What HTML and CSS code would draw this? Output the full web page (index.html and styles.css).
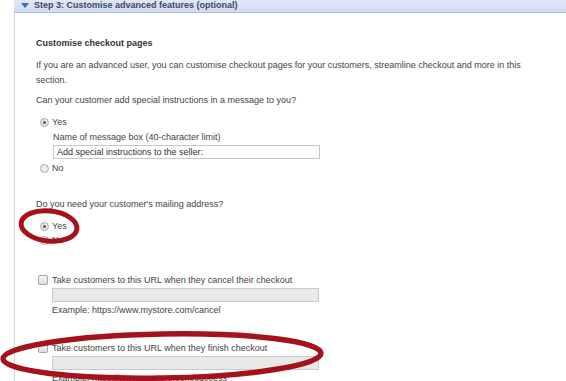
FILE: index.html
```html
<!DOCTYPE html>
<html lang="en">
<head>
    <meta charset="UTF-8">
    <title>Customise advanced features</title>
    <link rel="stylesheet" href="styles.css">
</head>
<body>
    <div class="step">
        <div class="step-head"><span class="caret"></span>Step 3: Customise advanced features (optional)</div>
        <div class="step-body">
            <h3>Customise checkout pages</h3>
            <p class="intro">If you are an advanced user, you can customise checkout pages for your customers, streamline checkout and more in this section.</p>

            <div class="question">Can your customer add special instructions in a message to you?</div>
            <div class="opt first"><span class="radio on"></span>Yes</div>
            <div class="sub">
                <div class="sub-label">Name of message box (40-character limit)</div>
                <input class="field" type="text" value="Add special instructions to the seller:">
            </div>
            <div class="opt no"><span class="radio"></span>No</div>

            <div class="question q2">Do you need your customer's mailing address?</div>
            <div class="opt first"><span class="radio on"></span>Yes</div>
            <div class="opt"><span class="radio"></span>No</div>

            <div class="url-block">
                <div class="check"><span class="box"></span>Take customers to this URL when they cancel their checkout</div>
                <input class="field off" type="text" disabled>
                <div class="example">Example: https://www.mystore.com/cancel</div>
            </div>
            <div class="url-block">
                <div class="check"><span class="box"></span>Take customers to this URL when they finish checkout</div>
                <input class="field off" type="text" disabled>
                <div class="example">Example: https://www.mystore.com/success</div>
            </div>
        </div>
    </div>

    <!-- red marks drawn over the screenshot -->
    <svg class="marks" width="566" height="381" viewBox="0 0 566 381">
        <ellipse cx="49" cy="226" rx="28" ry="15" transform="rotate(6 49 226)" />
        <ellipse class="wide" cx="162" cy="356" rx="159" ry="22" transform="rotate(-1 162 356)" />
    </svg>
</body>
</html>
```

FILE: styles.css
```css
body {
    margin: 0;
    font-family: "Liberation Sans", Arial, sans-serif;
    font-size: 9px;
    line-height: 14px;
    color: #444;
    background-color: #fff;
    overflow: hidden;
}

.step {
    margin-left: 14px;
}

.step-head {
    height: 12px;
    line-height: 10px;
    padding-left: 20px;
    position: relative;
    font-weight: bold;
    color: #3b4a5e;
    background: linear-gradient(#dfe8f6, #cfdbef);
    border-bottom: 1px solid #aebfd9;
}

.caret {
    position: absolute;
    left: 7px;
    top: 3px;
    border-left: 4px solid transparent;
    border-right: 4px solid transparent;
    border-top: 5px solid #3d6cb3;
}

.step-body {
    border-left: 1px solid #d3d3d3;
    padding: 23px 0 0 21px;
    height: 400px;
}

.step-body h3 {
    margin: 0;
    font-size: 9px;
    color: #333;
}

.intro {
    margin: 8px 0 0;
    width: 500px;
    line-height: 15px;
}

.question {
    margin-top: 5px;
}

.question.q2 {
    margin-top: 22px;
}

.opt {
    display: flex;
    align-items: center;
    padding-left: 4px;
}

.opt.first {
    margin-top: 8px;
}

.opt.no {
    margin-top: 2px;
}

.radio {
    width: 9px;
    height: 9px;
    margin-right: 3px;
    border: 1px solid #a9a9a9;
    border-radius: 50%;
    background: radial-gradient(#f4f4f4, #dcdcdc);
    box-sizing: border-box;
    position: relative;
}

.radio.on::after {
    content: "";
    position: absolute;
    left: 2px;
    top: 2px;
    width: 3px;
    height: 3px;
    border-radius: 50%;
    background-color: #555;
}

.sub {
    margin: 1px 0 0 17px;
}

.field {
    display: block;
    width: 267px;
    height: 14px;
    margin-top: 1px;
    padding: 0 3px;
    border: 1px solid #c3c7ce;
    box-sizing: border-box;
    font-family: inherit;
    font-size: 9px;
    color: #333;
    background-color: #fff;
}

.field.off {
    background-color: #e9e9e5;
    border-color: #c6cbd3;
}

.url-block {
    margin-top: 26px;
    padding-left: 2px;
}

.url-block + .url-block {
    margin-top: 24px;
}

.url-block .field {
    margin-left: 14px;
}

.check {
    display: flex;
    align-items: center;
}

.box {
    width: 10px;
    height: 10px;
    margin-right: 4px;
    border: 1px solid #a8a8a8;
    border-radius: 2px;
    background: linear-gradient(#f5f5f5, #dedede);
    box-sizing: border-box;
}

.example {
    margin: 1px 0 0 14px;
}

.marks {
    position: absolute;
    left: 0;
    top: 0;
    pointer-events: none;
}

.marks ellipse {
    fill: none;
    stroke: #a5121b;
    stroke-width: 5;
}

.marks ellipse.wide {
    stroke-width: 5.5;
}
```
